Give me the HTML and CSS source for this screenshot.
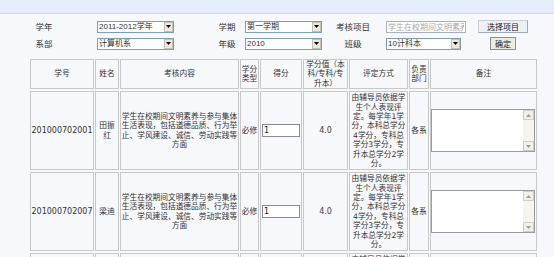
FILE: index.html
```html
<!DOCTYPE html>
<html lang="zh-CN">
<head>
    <meta charset="UTF-8">
    <title>学生素质考核</title>
    <link rel="stylesheet" href="styles.css">
</head>
<body>
    <div class="topbar"></div>

    <!-- 查询条件 -->
    <div class="filter">
        <span class="label">学年</span>
        <div class="field f1">
            <div class="select"><span class="sel-text">2011-2012学年</span><span class="sel-arrow"><svg width="5" height="3" viewBox="0 0 5 3"><path d="M0 0h5L2.5 3z" fill="#000"/></svg></span></div>
        </div>
        <span class="label">学期</span>
        <div class="field f2">
            <div class="select"><span class="sel-text">第一学期</span><span class="sel-arrow"><svg width="5" height="3" viewBox="0 0 5 3"><path d="M0 0h5L2.5 3z" fill="#000"/></svg></span></div>
        </div>
        <span class="label">考核项目</span>
        <div class="field f3">
            <input class="item-input" type="text" value="学生在校期间文明素养与参与集体生活表现" readonly>
        </div>
        <div class="btn-cell"><button class="btn btn-pick">选择项目</button></div>

        <span class="label">系部</span>
        <div class="field f1">
            <div class="select"><span class="sel-text">计算机系</span><span class="sel-arrow"><svg width="5" height="3" viewBox="0 0 5 3"><path d="M0 0h5L2.5 3z" fill="#000"/></svg></span></div>
        </div>
        <span class="label">年级</span>
        <div class="field f2">
            <div class="select"><span class="sel-text">2010</span><span class="sel-arrow"><svg width="5" height="3" viewBox="0 0 5 3"><path d="M0 0h5L2.5 3z" fill="#000"/></svg></span></div>
        </div>
        <span class="label">班级</span>
        <div class="field f3">
            <div class="select select-sm"><span class="sel-text">10计科本</span><span class="sel-arrow"><svg width="5" height="3" viewBox="0 0 5 3"><path d="M0 0h5L2.5 3z" fill="#000"/></svg></span></div>
        </div>
        <div class="btn-cell"><button class="btn btn-ok">确定</button></div>
    </div>

    <!-- 考核列表 -->
    <table class="grid">
        <tr>
            <th class="c-no">学号</th>
            <th class="c-name">姓名</th>
            <th class="c-content">考核内容</th>
            <th class="c-type">学分类型</th>
            <th class="c-score">得分</th>
            <th class="c-credit">学分值（本科/专科/专升本）</th>
            <th class="c-method">评定方式</th>
            <th class="c-dept">负责部门</th>
            <th class="c-memo">备注</th>
        </tr>
        <tr>
            <td class="num">201000702001</td>
            <td>田振红</td>
            <td>学生在校期间文明素养与参与集体生活表现，包括道德品质、行为举止、学风建设、诚信、劳动实践等方面</td>
            <td>必修</td>
            <td class="score"><input class="score-input" type="text" value="1"></td>
            <td class="num credit">4.0</td>
            <td class="method">由辅导员依据学生个人表现评定。每学年<span class="hl">1</span>学分，本科总学分4学分，专科总学分3学分，专升本总学分2学分。</td>
            <td>各系</td>
            <td class="memo-cell">
                <div class="memo">
                    <textarea></textarea>
                    <div class="vscroll">
                        <span class="sb-btn"><svg width="5" height="3" viewBox="0 0 5 3"><path d="M0 3h5L2.5 0z" fill="#9a9a9a"/></svg></span>
                        <span class="sb-track"></span>
                        <span class="sb-btn"><svg width="5" height="3" viewBox="0 0 5 3"><path d="M0 0h5L2.5 3z" fill="#9a9a9a"/></svg></span>
                    </div>
                </div>
            </td>
        </tr>
        <tr>
            <td class="num">201000702007</td>
            <td>梁迪</td>
            <td>学生在校期间文明素养与参与集体生活表现，包括道德品质、行为举止、学风建设、诚信、劳动实践等方面</td>
            <td>必修</td>
            <td class="score"><input class="score-input" type="text" value="1"></td>
            <td class="num credit">4.0</td>
            <td class="method">由辅导员依据学生个人表现评定。每学年<span class="hl">1</span>学分，本科总学分4学分，专科总学分3学分，专升本总学分2学分。</td>
            <td>各系</td>
            <td class="memo-cell">
                <div class="memo">
                    <textarea></textarea>
                    <div class="vscroll">
                        <span class="sb-btn"><svg width="5" height="3" viewBox="0 0 5 3"><path d="M0 3h5L2.5 0z" fill="#9a9a9a"/></svg></span>
                        <span class="sb-track"></span>
                        <span class="sb-btn"><svg width="5" height="3" viewBox="0 0 5 3"><path d="M0 0h5L2.5 3z" fill="#9a9a9a"/></svg></span>
                    </div>
                </div>
            </td>
        </tr>
        <tr>
            <td class="num">201000702012</td>
            <td>王磊</td>
            <td>学生在校期间文明素养与参与集体生活表现，包括道德品质、行为举止、学风建设、诚信、劳动实践等方面</td>
            <td>必修</td>
            <td class="score"><input class="score-input" type="text" value="1"></td>
            <td class="num credit">4.0</td>
            <td class="method">由辅导员依据学生个人表现评定。每学年<span class="hl">1</span>学分，本科总学分4学分，专科总学分3学分，专升本总学分2学分。</td>
            <td>各系</td>
            <td class="memo-cell">
                <div class="memo">
                    <textarea></textarea>
                    <div class="vscroll">
                        <span class="sb-btn"><svg width="5" height="3" viewBox="0 0 5 3"><path d="M0 3h5L2.5 0z" fill="#9a9a9a"/></svg></span>
                        <span class="sb-track"></span>
                        <span class="sb-btn"><svg width="5" height="3" viewBox="0 0 5 3"><path d="M0 0h5L2.5 3z" fill="#9a9a9a"/></svg></span>
                    </div>
                </div>
            </td>
        </tr>
    </table>
</body>
</html>
```

FILE: styles.css
```css
/* Global */
body {
    margin: 0;
    background: #f6f8fc;
    font-family: "Noto Sans CJK SC", sans-serif;
    color: #333;
}

.topbar {
    height: 13px;
    background: #e6eefb;
    border-bottom: 1px solid #d0d9e7;
}

/* Filter form */
.filter {
    display: grid;
    grid-template-columns: 48px 143px 32px 80px 60px 93px 54px;
    grid-template-rows: 13px 13px;
    row-gap: 4px;
    align-items: center;
    padding: 6px 0 0 20px;
    margin-bottom: 7px;
    font-size: 8.5px;
}

.label {
    justify-self: center;
    line-height: 1;
    white-space: nowrap;
}

.f1 { padding-left: 29px; }
.f2 { padding-left: 2px; }
.f3 { padding-left: 3px; }

.select {
    display: flex;
    width: 77px;
    height: 12px;
    box-sizing: border-box;
    border: 1px solid #7f9db9;
    background: #fff;
    font-family: "Liberation Sans", "Noto Sans CJK SC", sans-serif;
    font-size: 8px;
}

.select-sm { width: 75px; }

.sel-text {
    flex: 1;
    padding-left: 1px;
    line-height: 10px;
    white-space: nowrap;
    overflow: hidden;
}

.sel-arrow {
    width: 9px;
    box-sizing: border-box;
    background: #ece9d8;
    border: 1px solid #c3c0b2;
    display: flex;
    align-items: center;
    justify-content: center;
}

.item-input {
    display: block;
    width: 80px;
    height: 12px;
    box-sizing: border-box;
    margin: 0;
    padding: 0 1px;
    border: 1px solid #a7b0bc;
    background: #fff;
    color: #a8a8a8;
    font: 8px "Noto Sans CJK SC", sans-serif;
    outline: none;
}

.btn-cell {
    justify-self: center;
}

.btn {
    display: block;
    margin: 0;
    padding: 0;
    box-sizing: border-box;
    font: 8px "Noto Sans CJK SC", sans-serif;
    color: #222;
}

.btn-pick {
    width: 50px;
    height: 13px;
    background: #eef0f4;
    border: 1px solid #c9ced6;
    border-right-color: #a3aab5;
    border-bottom-color: #a3aab5;
}

.btn-ok {
    width: 26px;
    height: 13px;
    background: #ecebe3;
    border: 1px solid #8f8f8f;
}

/* Table */
.grid {
    table-layout: fixed;
    border-collapse: separate;
    border-spacing: 1px 2px;
    width: 509px;
    margin-left: 29px;
    font-family: "DejaVu Sans", "Noto Sans CJK SC", sans-serif;
    font-size: 7.7px;
    line-height: 9.4px;
}

.grid th,
.grid td {
    box-sizing: border-box;
    border: 1px solid #c8c8c8;
    padding: 0;
    text-align: center;
    vertical-align: middle;
    font-weight: normal;
    overflow: hidden;
}

.grid th { height: 30px; }
.grid td { height: 79px; }

.c-no { width: 64px; }
.c-name { width: 24px; }
.c-content { width: 119px; }
.c-type { width: 19px; }
.c-score { width: 42px; }
.c-credit { width: 45px; }
.c-method { width: 59px; }
.c-dept { width: 20px; }
.c-memo { width: 107px; }

.num { font-size: 8px; }
.credit { color: #444; }
.hl { color: #8b0000; }

.score { text-align: left; }

.score-input {
    display: block;
    width: 38px;
    height: 13px;
    box-sizing: border-box;
    margin: 0 0 0 1px;
    padding: 0 1px;
    border: 1px solid #8c8c8c;
    background: #fff;
    font: 8px "DejaVu Sans", sans-serif;
    color: #222;
}

/* Memo with a classic scrollbar */
.memo {
    display: flex;
    width: 104px;
    height: 43px;
    box-sizing: border-box;
    border: 1px solid #9b9b9b;
    background: #fff;
}

.memo textarea {
    flex: 1;
    margin: 0;
    border: 0;
    padding: 0;
    resize: none;
    outline: none;
    background: #fff;
}

.vscroll {
    width: 11px;
    display: flex;
    flex-direction: column;
    background: #f5f4ef;
}

.sb-btn {
    height: 10px;
    box-sizing: border-box;
    border: 1px solid #cfcdc4;
    background: #f1f0ea;
    display: flex;
    align-items: center;
    justify-content: center;
}

.sb-track { flex: 1; }
```
